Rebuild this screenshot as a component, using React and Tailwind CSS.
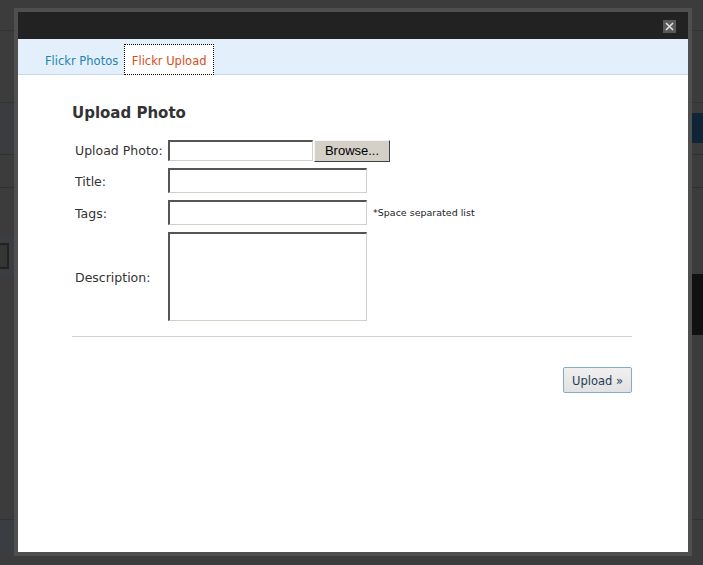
import React from "react";

export default function App() {
  const dv = { fontFamily: '"DejaVu Sans", Verdana, sans-serif' };
  return (
    <div className="relative w-[703px] h-[565px] overflow-hidden bg-[#3c3c3c]" style={dv}>
      {/* background page remnants (behind the overlay) */}
      <div className="absolute left-0 top-[30px] w-full h-px bg-[#333333]" />
      <div className="absolute left-0 top-[102px] w-full h-px bg-[#333333]" />
      <div className="absolute left-0 top-[103px] w-[14px] h-[51px] bg-[#3a3c40]" />
      <div className="absolute left-0 top-[154px] w-full h-px bg-[#303030]" />
      <div className="absolute left-0 top-[187px] w-full h-px bg-[#303030]" />
      <div className="absolute left-0 top-[237px] w-[14px] h-[38px] bg-[#3a3d42]" />
      <div className="absolute left-0 top-[243px] w-[9px] h-[26px] bg-[#353535] border-2 border-l-0 border-[#222222]" />
      <div className="absolute left-0 top-[519px] w-full h-px bg-[#333333]" />
      <div className="absolute left-0 top-[520px] w-[14px] h-[33px] bg-[#3a3d42]" />
      <div className="absolute left-[692px] top-[113px] w-[11px] h-[30px] bg-[#0f2535]" />
      <div className="absolute left-[692px] top-[274px] w-[11px] h-[61px] bg-[#111111]" />

      {/* modal */}
      <div className="absolute left-[14px] top-[8px] w-[678px] h-[548px] border-4 border-[#4f4f4f] bg-white flex flex-col">
        <div className="h-[27px] bg-[#222222] flex justify-end items-start pr-[12px] pt-[8px]">
          <div className="w-[13px] h-[13px] bg-[#5a5a5a] flex items-center justify-center">
            <svg width="9" height="9" viewBox="0 0 9 9">
              <path d="M1 1 L8 8 M8 1 L1 8" stroke="#e0e0e0" strokeWidth="1.6" />
            </svg>
          </div>
        </div>
        <div className="h-[36px] bg-[#e3f0fb] border-b border-[#c6d9ea] flex items-end pl-[27px]">
          <div className="h-[31px] pt-[5px] flex items-center text-[11.5px] text-[#2583ad] mb-[-1px]">Flickr Photos</div>
          <div className="ml-[6px] w-[90px] h-[31px] pt-[5px] mb-[-1px] bg-white border border-dotted border-black flex items-center justify-center text-[11.5px] text-[#d54e21]">
            Flickr Upload
          </div>
        </div>
        <div className="pl-[54px] pr-[56px] pt-[29px] flex flex-col">
          <h2 className="text-[15px] leading-[18px] font-bold text-[#333333]">Upload Photo</h2>
          <div className="mt-[18px] flex flex-col text-[12.5px] text-[#333333]">
            <div className="flex items-center h-[22px]">
              <div className="w-[96px] pl-[3px] mt-[1px]">Upload Photo:</div>
              <div className="w-[145px] h-[21px] self-start bg-white border-t-2 border-l-2 border-t-[#555555] border-l-[#555555] border-b border-r border-b-[#d4d0c8] border-r-[#d4d0c8]" />
              <div
                className="ml-px w-[76px] h-[22px] bg-[#d4d0c8] border border-t-[#f4f4f4] border-l-[#f4f4f4] border-b-[#404040] border-r-[#404040] flex items-center justify-center text-[13px] text-black"
                style={{ fontFamily: '"Liberation Sans", Arial, sans-serif' }}
              >
                Browse...
              </div>
            </div>
            <div className="flex items-center h-[25px] mt-[6px]">
              <div className="w-[96px] pl-[3px] mt-[4px]">Title:</div>
              <div className="w-[199px] h-[25px] bg-white border-t-2 border-l-2 border-t-[#555555] border-l-[#555555] border-b border-r border-b-[#d4d0c8] border-r-[#d4d0c8]" />
            </div>
            <div className="flex items-center h-[25px] mt-[7px]">
              <div className="w-[96px] pl-[3px] mt-[3px]">Tags:</div>
              <div className="w-[199px] h-[25px] bg-white border-t-2 border-l-2 border-t-[#555555] border-l-[#555555] border-b border-r border-b-[#d4d0c8] border-r-[#d4d0c8]" />
              <div className="ml-[6px] text-[9.5px] text-[#222222] mt-[1px]">*Space separated list</div>
            </div>
            <div className="flex items-center h-[89px] mt-[7px]">
              <div className="w-[96px] pl-[3px] mt-[4px]">Description:</div>
              <div className="w-[199px] h-[89px] bg-white border-t-2 border-l-2 border-t-[#555555] border-l-[#555555] border-b border-r border-b-[#d4d0c8] border-r-[#d4d0c8]" />
            </div>
          </div>
          <div className="mt-[15px] h-px bg-[#d0d0d0]" />
          <div className="mt-[30px] flex justify-end">
            <div className="w-[69px] h-[26px] pt-[3px] rounded-[2px] border border-[#86abc9] bg-gradient-to-b from-[#f0f0f0] to-[#e2e2e2] flex items-center justify-center text-[11.5px] text-[#1f3a5a]">
              Upload »
            </div>
          </div>
        </div>
      </div>
    </div>
  );
}
